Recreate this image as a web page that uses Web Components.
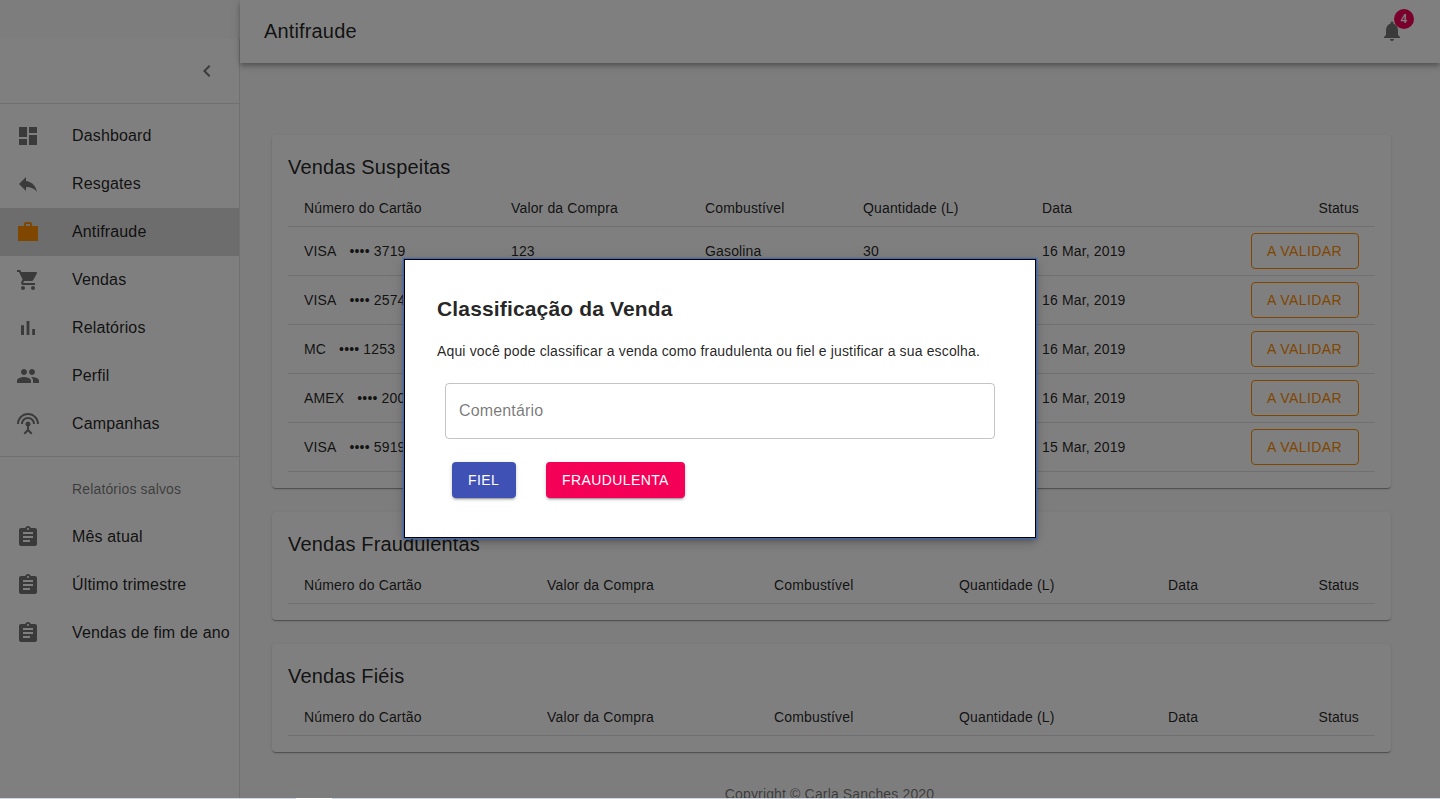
<!DOCTYPE html>
<html lang="pt-BR">
<head>
<meta charset="utf-8">
<title>Antifraude</title>
<style>
html,body{margin:0;height:100%;overflow:hidden}
body{font-family:"Liberation Sans",Arial,sans-serif;font-size:14px;line-height:1.43;letter-spacing:.15px;color:rgba(0,0,0,.87);background:#fafafa}
</style>
</head>
<body>
<antifraud-page></antifraud-page>
<script>
const ICONS={
 dashboard:'M3 13h8V3H3v10zm0 8h8v-6H3v6zm10 0h8V11h-8v10zm0-18v6h8V3h-8z',
 reply:'M10 9V5l-7 7 7 7v-4.100c5 0 8.500 1.600 11 5.100-1-5-4-10-11-11z',
 bag:'M22 6h-6V4c0-1.100-.9-2-2-2h-4c-1.100 0-2 .9-2 2v2H2v15h20V6zM10 4h4v2h-4V4z',
 cart:'M7 18c-1.100 0-1.990.9-1.990 2S5.900 22 7 22s2-.9 2-2-.9-2-2-2zM1 2v2h2l3.600 7.590-1.350 2.450c-.16.28-.25.61-.25.96 0 1.100.9 2 2 2h12v-2H7.420c-.14 0-.25-.11-.25-.25l.03-.12.9-1.630h7.450c.75 0 1.410-.41 1.750-1.030l3.580-6.490c.08-.14.12-.31.12-.48 0-.55-.45-1-1-1H5.210l-.94-2H1zm16 16c-1.100 0-1.990.9-1.990 2s.89 2 1.990 2 2-.9 2-2-.9-2-2-2z',
 chart:'M5 9.200h3V19H5zM10.600 5h2.800v14h-2.800zm5.600 8H19v6h-2.800z',
 people:'M16 11c1.660 0 2.990-1.340 2.990-3S17.660 5 16 5c-1.660 0-3 1.340-3 3s1.340 3 3 3zm-8 0c1.660 0 2.990-1.340 2.990-3S9.660 5 8 5C6.340 5 5 6.340 5 8s1.340 3 3 3zm0 2c-2.330 0-7 1.170-7 3.500V19h14v-2.500c0-2.330-4.670-3.500-7-3.500zm8 0c-.29 0-.62.02-.97.05 1.160.84 1.970 1.970 1.970 3.450V19h6v-2.500c0-2.330-4.670-3.500-7-3.500z',
 antenna:'M12 5c-3.870 0-7 3.130-7 7h2c0-2.760 2.240-5 5-5s5 2.240 5 5h2c0-3.870-3.130-7-7-7zm1 9.290c.88-.39 1.500-1.260 1.500-2.290 0-1.380-1.120-2.500-2.500-2.500S9.500 10.620 9.500 12c0 1.020.62 1.900 1.500 2.290v3.300L7.590 21 9 22.410l3-3 3 3L16.410 21 13 17.590v-3.300zM12 1C5.930 1 1 5.930 1 12h2c0-4.970 4.030-9 9-9s9 4.030 9 9h2c0-6.070-4.930-11-11-11z',
 clip:'M19 3h-4.180C14.400 1.840 13.300 1 12 1c-1.300 0-2.400.84-2.820 2H5c-1.100 0-2 .9-2 2v14c0 1.100.9 2 2 2h14c1.100 0 2-.9 2-2V5c0-1.100-.9-2-2-2zm-7 0c.55 0 1 .45 1 1s-.45 1-1 1-1-.45-1-1 .45-1 1-1zm2 14H7v-2h7v2zm3-4H7v-2h10v2zm0-4H7V7h10v2z',
 left:'M15.410 7.410L14 6l-6 6 6 6 1.410-1.410L10.830 12z',
 bell:'M12 22c1.100 0 2-.9 2-2h-4c0 1.100.89 2 2 2zm6-6v-5c0-3.070-1.640-5.640-4.500-6.320V4c0-.83-.67-1.500-1.500-1.500s-1.500.67-1.500 1.500v.68C7.630 5.360 6 7.920 6 11v5l-2 2v1h16v-1l-2-2z'
};
const define=(name,render)=>customElements.define(name,class extends HTMLElement{
 constructor(){super();this.attachShadow({mode:'open'});}
 connectedCallback(){this.shadowRoot.innerHTML=render(this);}
});
define('md-icon',e=>`<style>:host{display:block;width:24px;height:24px;color:rgba(0,0,0,.54)}svg{display:block;fill:currentColor}</style><svg width="24" height="24" viewBox="0 0 24 24"><path d="${ICONS[e.getAttribute('name')]}"/></svg>`);
define('nav-item',e=>`<style>
:host{display:flex;align-items:center;height:48px;box-sizing:border-box;padding-left:16px;font-size:16px;line-height:24px;white-space:nowrap}
:host([selected]){background:rgba(0,0,0,.14)}
:host([selected]) md-icon{color:#ff8c00}
md-icon{margin-right:32px;flex:none}
</style><md-icon name="${e.getAttribute('icon')}"></md-icon><span><slot></slot></span>`);
define('side-nav',()=>`<style>
:host{display:flex;flex-direction:column;width:239px;flex:none;margin-top:39px;background:#fff;border-right:1px solid rgba(0,0,0,.12)}
header{height:64px;display:flex;align-items:center;justify-content:flex-end;padding-right:20px;box-sizing:border-box}
section{padding:8px 0;border-top:1px solid rgba(0,0,0,.12)}
h3{margin:0;padding-left:72px;font-size:14px;font-weight:400;line-height:48px;color:rgba(0,0,0,.54)}
</style><header><md-icon name="left"></md-icon></header>
<section><nav-item icon="dashboard">Dashboard</nav-item><nav-item icon="reply">Resgates</nav-item><nav-item icon="bag" selected>Antifraude</nav-item><nav-item icon="cart">Vendas</nav-item><nav-item icon="chart">Relatórios</nav-item><nav-item icon="people">Perfil</nav-item><nav-item icon="antenna">Campanhas</nav-item></section>
<section><h3>Relatórios salvos</h3><nav-item icon="clip">Mês atual</nav-item><nav-item icon="clip">Último trimestre</nav-item><nav-item icon="clip">Vendas de fim de ano</nav-item></section>`);
define('top-bar',()=>`<style>
:host{display:flex;align-items:center;justify-content:space-between;height:63px;box-sizing:border-box;padding:0 36px 0 24px;background:#fff;flex:none;position:relative;z-index:1;box-shadow:0 2px 4px -1px rgba(0,0,0,.2),0 4px 5px rgba(0,0,0,.14),0 1px 10px rgba(0,0,0,.12)}
h1{margin:0 0 2px;font-size:20px;font-weight:400;line-height:30px}
.bell{position:relative;margin-bottom:1px}
.badge{position:absolute;left:14px;top:-10px;width:20px;height:20px;border-radius:10px;background:#f50057;color:#fff;font:500 12px/20px Roboto,sans-serif;text-align:center;letter-spacing:0}
</style><h1>Antifraude</h1><div class="bell"><md-icon name="bell"></md-icon><span class="badge">4</span></div>`);
define('status-button',()=>`<style>
:host{display:inline-block;vertical-align:middle;box-sizing:border-box;height:36px;width:108px;text-align:left;padding:5px 15px;border:1px solid #ff8c00;border-radius:4px;color:#ff8c00;font-size:14px;line-height:24px;letter-spacing:.4px;white-space:nowrap}
</style><slot></slot>`);
define('sales-card',e=>{
 const rows=JSON.parse(e.getAttribute('rows')||'[]');
 const cols=e.getAttribute('cols').split(' ');
 return `<style>
:host{display:block;padding:16px;background:#fff;border-radius:4px;box-shadow:0 2px 1px -1px rgba(0,0,0,.2),0 1px 1px rgba(0,0,0,.14),0 1px 3px rgba(0,0,0,.12)}
h2{margin:0 0 7px;font-size:20px;font-weight:400;line-height:32px}
table{width:100%;border-collapse:separate;border-spacing:0;table-layout:fixed}
th,td{box-sizing:border-box;padding:0 16px;text-align:left;font-weight:400;border-bottom:1px solid rgba(0,0,0,.12);white-space:pre}
th{height:37px}td{height:49px}
th:last-child,td:last-child{text-align:right}
i{font-style:normal;margin-left:13px}
</style><h2>${e.getAttribute('heading')}</h2><table><colgroup>${cols.map(w=>`<col style="width:${w}px">`).join('')}</colgroup>
<tr>${['Número do Cartão','Valor da Compra','Combustível','Quantidade (L)','Data','Status'].map(t=>`<th>${t}</th>`).join('')}</tr>
${rows.map(([b,n,v,f,q,d])=>`<tr><td>${b}<i>•••• ${n}</i></td><td>${v}</td><td>${f}</td><td>${q}</td><td>${d}</td><td><status-button>A VALIDAR</status-button></td></tr>`).join('')}</table>`;});
define('text-box',()=>`<style>:host{display:flex;align-items:center;box-sizing:border-box;height:56px;padding:0 13px;border:1px solid rgba(0,0,0,.23);border-radius:4px;font-size:16px;line-height:24px;color:rgba(0,0,0,.54)}</style><slot></slot>`);
define('solid-button',()=>`<style>:host{display:block;height:36px;min-width:64px;box-sizing:border-box;padding:6px 16px;border-radius:4px;background:var(--fill);color:#fff;font-size:14px;line-height:24px;letter-spacing:.4px;box-shadow:0 3px 1px -2px rgba(0,0,0,.2),0 2px 2px rgba(0,0,0,.14),0 1px 5px rgba(0,0,0,.12)}</style><slot></slot>`);
define('classify-dialog',()=>`<style>
:host{position:absolute;inset:0;display:flex;align-items:center;justify-content:center;background:rgba(0,0,0,.5);z-index:5}
.paper{box-sizing:border-box;width:632px;height:279px;margin-bottom:1px;padding:34px 32px 32px;background:#fff;border:1px solid #000;outline:1px solid #3e68b5;box-shadow:0 0 0 2px rgba(62,104,181,.2),0 3px 5px -1px rgba(0,0,0,.2),0 5px 8px rgba(0,0,0,.14),0 1px 14px rgba(0,0,0,.12)}
h2{margin:0 0 17px;font-size:21px;line-height:30px;letter-spacing:.15px}
p{margin:0;line-height:20px}
text-box{margin:22px 8px 23px}
.actions{display:flex;gap:30px;margin-left:15px}
</style><div class="paper"><h2>Classificação da Venda</h2><p>Aqui você pode classificar a venda como fraudulenta ou fiel e justificar a sua escolha.</p><text-box>Comentário</text-box><div class="actions"><solid-button style="--fill:#3f51b5">FIEL</solid-button><solid-button style="--fill:#f50057">FRAUDULENTA</solid-button></div></div>`);
const SALES=[['VISA','3719','123','Gasolina','30','16 Mar, 2019'],['VISA','2574','','','','16 Mar, 2019'],['MC','1253','','','','16 Mar, 2019'],['AMEX','2000','','','','16 Mar, 2019'],['VISA','5919','','','','15 Mar, 2019']];
define('antifraud-page',()=>`<style>
:host{display:flex;flex-direction:column;height:799px}
.view{position:relative;display:flex;flex:1;min-height:0;overflow:hidden}
.content{flex:1;min-width:0;display:flex;flex-direction:column}
main{display:flex;flex-direction:column;gap:24px;padding:72px 49px 0 32px}
footer{text-align:center;line-height:20px;color:rgba(0,0,0,.54);margin-top:8px;padding-right:4px}
.edge{height:1px;flex:none;background:linear-gradient(90deg,transparent 296px,#fff 296px 332px,transparent 332px),#d2d8e2}
</style><div class="view"><side-nav></side-nav><div class="content"><top-bar></top-bar><main>
<sales-card heading="Vendas Suspeitas" cols="207 194 158 179 179 170" rows='${JSON.stringify(SALES)}'></sales-card>
<sales-card heading="Vendas Fraudulentas" cols="243 227 185 209 130 93"></sales-card>
<sales-card heading="Vendas Fiéis" cols="243 227 185 209 130 93"></sales-card>
<footer>Copyright © Carla Sanches 2020</footer></main></div><classify-dialog></classify-dialog></div><div class="edge"></div>`);
</script>
</body>
</html>
